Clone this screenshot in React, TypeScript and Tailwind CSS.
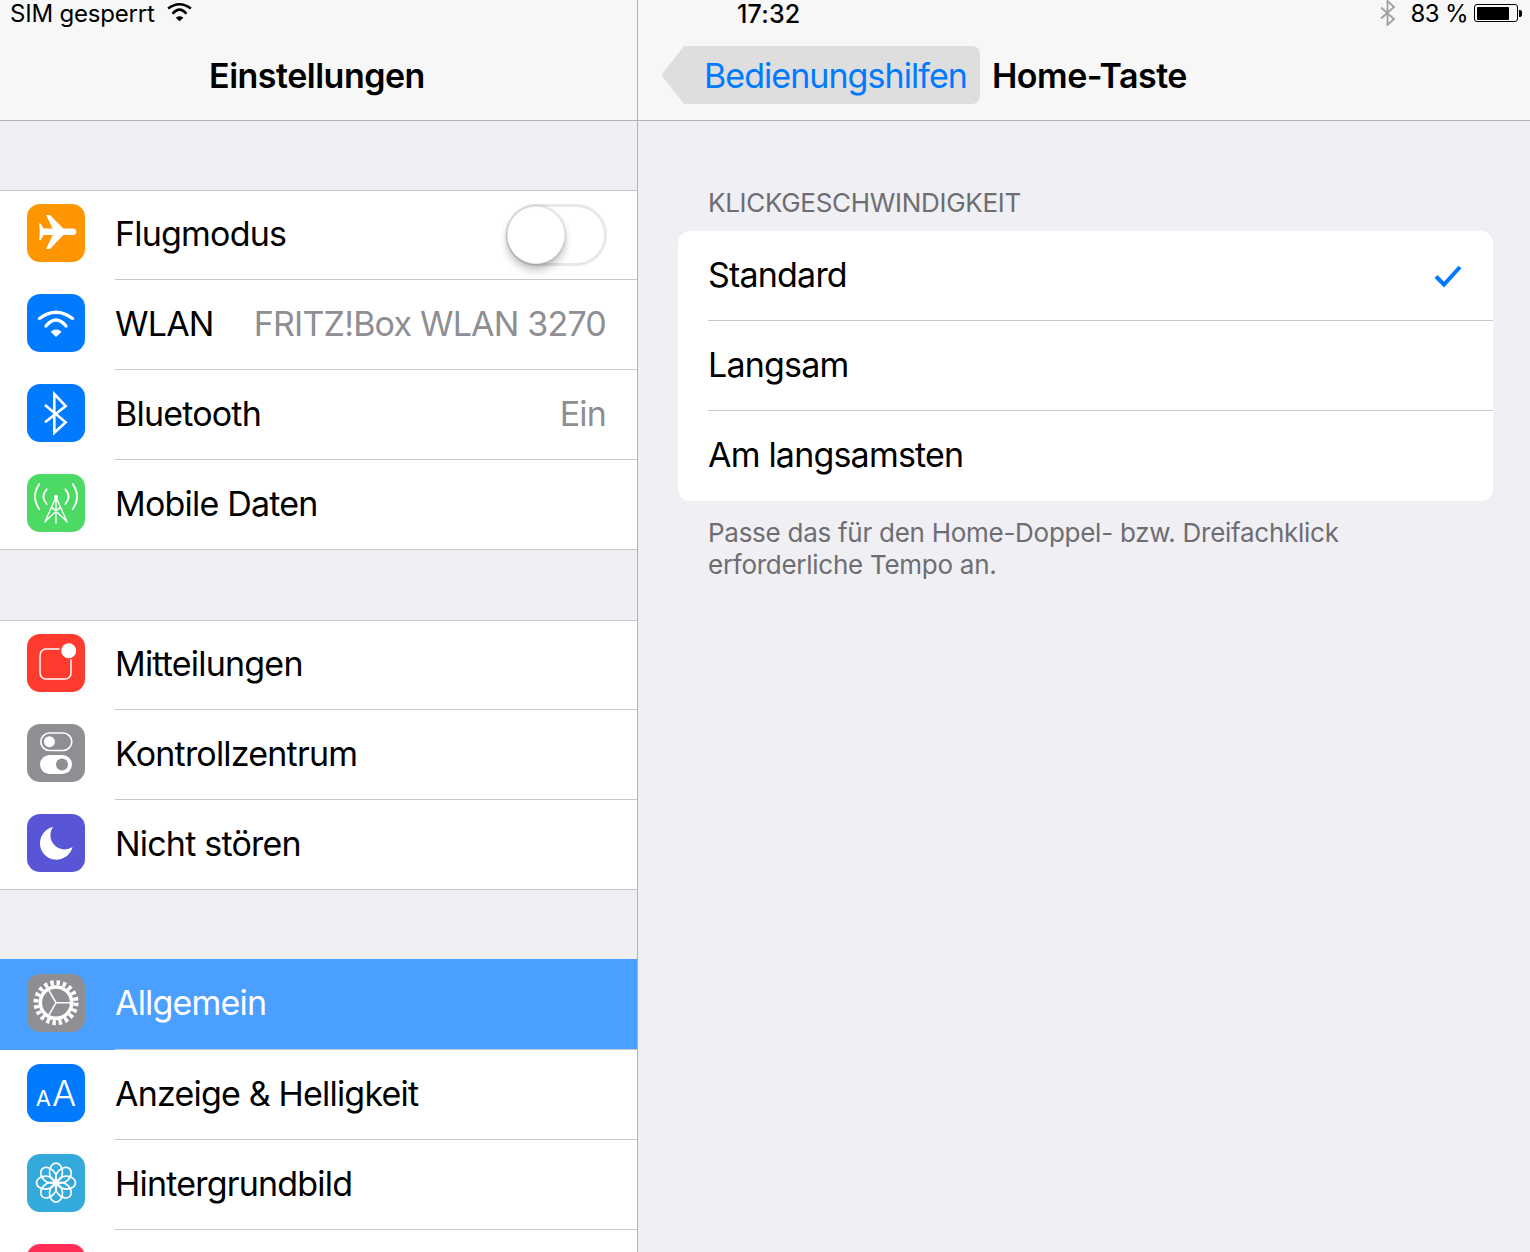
import type { ReactNode } from "react";

function Tile({ color, children }: { color: string; children?: ReactNode }) {
  return (
    <div className={`w-[58px] h-[58px] rounded-[13px] shrink-0 overflow-hidden ${color}`}>
      {children}
    </div>
  );
}

function Glyph({ children }: { children: ReactNode }) {
  return (
    <svg viewBox="0 0 58 58" width="58" height="58" fill="none" stroke="white" strokeLinecap="round" strokeLinejoin="round">
      {children}
    </svg>
  );
}

const PlaneIcon = () => (
  <Tile color="bg-[#ff9500]">
    <Glyph>
      <path
        d="M12 19.5h1.7L16.5 24.5H25.7L19 11h4L36.3 24.5H46a3.3 3.3 0 0 1 0 6.6H36.3L23 45h-4L25.7 31.1H16.5L13.7 36H12l.8-8.2z"
        fill="white"
        stroke="none"
      />
    </Glyph>
  </Tile>
);

const WifiIcon = () => (
  <Tile color="bg-[#007aff]">
    <Glyph>
      <path d="M12.5 24.5Q29 12 45.5 24.5" strokeWidth="3.4" />
      <path d="M19 32Q29 20 39 32" strokeWidth="3.4" />
      <path d="M23.7 37.7Q29 33.5 34.7 37.7L29 43z" fill="white" stroke="none" />
    </Glyph>
  </Tile>
);

const BluetoothIcon = () => (
  <Tile color="bg-[#007aff]">
    <Glyph>
      <path d="M18 21L38.7 38.3L27.3 48.7V10L38.7 22L18 38.3" strokeWidth="2.6" strokeLinecap="butt" strokeLinejoin="miter" />
    </Glyph>
  </Tile>
);

const TowerIcon = () => (
  <Tile color="bg-[#4cd964]">
    <Glyph>
      <path d="M12.3 10Q3.7 22.5 12.3 35.3M19.7 15.3Q13 22.5 19.7 30M45.7 10Q54.3 22.5 45.7 35.3M38.3 15.3Q45 22.5 38.3 30" strokeWidth="1.8" />
      <circle cx="29" cy="22.7" r="2" fill="white" stroke="none" />
      <path d="M29 23L18 47.7M29 23L40 47.7M29 23V49M24.7 33L40 47.7M33.3 33L18 47.7" strokeWidth="1.4" />
    </Glyph>
  </Tile>
);

const NotifyIcon = () => (
  <Tile color="bg-[#ff3b30]">
    <Glyph>
      <path d="M32 15H19a6 6 0 0 0-6 6V39a6 6 0 0 0 6 6H38a6 6 0 0 0 6-6V26" strokeWidth="1.5" />
      <circle cx="41.7" cy="16.7" r="7.5" fill="white" stroke="none" />
    </Glyph>
  </Tile>
);

const ControlIcon = () => (
  <Tile color="bg-[#8e8e93]">
    <Glyph>
      <rect x="13.8" y="9" width="31" height="17.5" rx="8.75" strokeWidth="1.7" />
      <circle cx="22.4" cy="17.7" r="5.5" fill="white" stroke="none" />
      <rect x="13" y="31" width="32" height="19" rx="9.5" fill="white" stroke="none" />
      <circle cx="35" cy="40.4" r="6" fill="#8e8e93" stroke="none" />
    </Glyph>
  </Tile>
);

const MoonIcon = () => (
  <Tile color="bg-[#5856d6]">
    <Glyph>
      <path d="M26 13A16.5 16.5 0 1 0 45.5 33A14.2 14.2 0 0 1 26 13z" fill="white" stroke="none" />
    </Glyph>
  </Tile>
);

const GearIcon = () => (
  <Tile color="bg-[#8e8e93]">
    <Glyph>
      <circle cx="29" cy="28.7" r="20" stroke="white" strokeWidth="5" strokeDasharray="3.4 2.88" strokeLinecap="butt" />
      <circle cx="29" cy="28.7" r="15.7" strokeWidth="3.6" />
      <path d="M29 28.7L45 28.7M29 28.7L21 14.8M29 28.7L21 42.6" strokeWidth="1.6" />
    </Glyph>
  </Tile>
);

const TextSizeIcon = () => (
  <Tile color="bg-[#007aff]">
    <div className="h-full flex items-baseline justify-center gap-[1px] pt-[11px] text-white leading-[36px] tracking-normal">
      <span className="text-[22px]">A</span>
      <span className="text-[36px] font-light">A</span>
    </div>
  </Tile>
);

const FlowerIcon = () => (
  <Tile color="bg-[#34aadc]">
    <Glyph>
      {[0, 45, 90, 135, 180, 225, 270, 315].map((a) => (
        <ellipse key={a} cx="29" cy="18.2" rx="6.5" ry="9" strokeWidth="1.7" transform={`rotate(${a} 29 28.7)`} />
      ))}
      <circle cx="29" cy="28.7" r="3" fill="white" stroke="none" />
    </Glyph>
  </Tile>
);

function Toggle() {
  return (
    <div className="w-[101px] h-[62px] -mr-px rounded-full border-[3px] border-[#e8e8e8] bg-white flex items-center">
      <div className="w-[58px] h-[58px] rounded-full bg-white -ml-[2px] border border-black/5 shadow-[0_6px_8px_rgba(0,0,0,0.25),0_0_3px_rgba(0,0,0,0.25)]" />
    </div>
  );
}

type RowProps = {
  icon: ReactNode;
  label?: string;
  value?: string;
  right?: ReactNode;
  first?: boolean;
  last?: boolean;
  selected?: boolean;
};

function Row({ icon, label, value, right, first, last, selected }: RowProps) {
  return (
    <div
      className={`flex items-stretch pl-[27px] ${
        selected ? "h-[91px] bg-[#4a9fff] text-white" : "h-[90px] bg-white text-black"
      } ${first && !selected ? "shadow-[inset_0_1px_0_#c8c7cc]" : ""} ${last ? "border-b border-[#c8c7cc]" : ""}`}
    >
      <div className={selected ? "mt-[15px]" : "mt-[14px]"}>{icon}</div>
      <div
        className={`ml-[30px] flex-1 flex items-center justify-between pr-[31px] leading-[40px] tracking-[-0.8px] ${
          last ? "" : "border-b border-[#c8c7cc]"
        }`}
      >
        <span className="-mt-[2px]">{label}</span>
        {value && <span className="-mt-[2px] text-[#8e8e93]">{value}</span>}
        {right}
      </div>
    </div>
  );
}

function Option({ label, checked, last }: { label: string; checked?: boolean; last?: boolean }) {
  return (
    <div className="h-[90px] pl-[30px]">
      <div className={`h-full flex items-center justify-between pr-[31px] leading-[40px] tracking-[-0.8px] ${last ? "" : "border-b border-[#c8c7cc]"}`}>
        <span className="-mt-[2px]">{label}</span>
        {checked && (
          <svg width="28" height="24" viewBox="0 0 28 24" fill="none" stroke="#007aff" strokeWidth="4">
            <path d="M2 12.5L10 20.5L26 3" />
          </svg>
        )}
      </div>
    </div>
  );
}

export default function App() {
  return (
    <div className="flex w-[1530px] h-[1252px] overflow-hidden bg-[#efeff4] font-['Inter',sans-serif] text-[34px] tracking-[-0.5px] text-black">
      <aside className="w-[638px] shrink-0 border-r border-[#b2b2b2]">
        <header className="h-[121px] bg-[#f7f7f7] border-b border-[#b2b2b2]">
          <div className="h-[26px] pt-[2px] flex items-center pl-[10px] text-[24px] leading-[24px] tracking-[-0.2px]">
            <span>SIM gesperrt</span>
            <svg className="ml-[12px] -mt-[4px]" width="25" height="20" viewBox="11 15 36 29" fill="none" stroke="black">
              <path d="M12.5 24.5Q29 12 45.5 24.5" strokeWidth="3.8" />
              <path d="M19 32Q29 20 39 32" strokeWidth="3.8" />
              <path d="M23.7 37.7Q29 33.5 34.7 37.7L29 43z" fill="black" stroke="none" />
            </svg>
          </div>
          <div className="mt-[20px] h-[58px] flex items-center justify-center font-semibold pr-[3px]">Einstellungen</div>
        </header>

        <div className="h-[69px]" />
        <Row first icon={<PlaneIcon />} label="Flugmodus" right={<Toggle />} />
        <Row icon={<WifiIcon />} label="WLAN" value="FRITZ!Box WLAN 3270" />
        <Row icon={<BluetoothIcon />} label="Bluetooth" value="Ein" />
        <Row last icon={<TowerIcon />} label="Mobile Daten" />

        <div className="h-[70px]" />
        <Row first icon={<NotifyIcon />} label="Mitteilungen" />
        <Row icon={<ControlIcon />} label="Kontrollzentrum" />
        <Row last icon={<MoonIcon />} label="Nicht stören" />

        <div className="h-[69px]" />
        <Row first selected icon={<GearIcon />} label="Allgemein" />
        <Row icon={<TextSizeIcon />} label="Anzeige & Helligkeit" />
        <Row icon={<FlowerIcon />} label="Hintergrundbild" />
        <Row icon={<Tile color="bg-[#ff2d55]" />} />
      </aside>

      <main className="flex-1 min-w-0">
        <header className="h-[121px] bg-[#f7f7f7] border-b border-[#b2b2b2]">
          <div className="h-[26px] pt-[2px] flex items-center pl-[99px] pr-[8px] text-[24px] leading-[24px] tracking-normal">
            <span className="font-medium text-[25px] tracking-[0.2px]">17:32</span>
            <svg className="ml-auto -mt-[2px]" width="18" height="26" viewBox="0 0 18 26" fill="none" stroke="#a0a0a0" strokeWidth="1.8">
              <path d="M2 7.5L15 19L8.5 25V1L15 7L2 18.5" />
            </svg>
            <span className="ml-[13px] tracking-[-0.6px]">83 %</span>
            <div className="-mt-[2px] ml-[6px] w-[44px] h-[18px] rounded-[3px] border border-black p-[1.5px]">
              <div className="h-full w-[84%] rounded-[1px] bg-black" />
            </div>
            <div className="-mt-[2px] ml-px w-[3px] h-[7px] rounded-r-[2px] bg-black" />
          </div>
          <div className="mt-[20px] h-[58px] pl-[24px] flex items-center">
            <svg width="31" height="58" viewBox="0 0 31 58" fill="#dedede">
              <path d="M31 0V58H22L1.2 31.5a4 4 0 0 1 0-5L22 0z" />
            </svg>
            <div className="h-full w-[287px] pl-[11px] flex items-center rounded-r-[8px] bg-[#dedede] text-[#007aff] tracking-[-0.95px]">
              Bedienungshilfen
            </div>
            <span className="ml-[12px] font-semibold">Home-Taste</span>
          </div>
        </header>

        <div className="pt-[66px] pl-[40px] pr-[37px]">
          <div className="pl-[30px] text-[26px] leading-[32px] tracking-[-0.3px] text-[#6d6d72]">KLICKGESCHWINDIGKEIT</div>
          <div className="mt-[12px] rounded-[12px] bg-white">
            <Option label="Standard" checked />
            <Option label="Langsam" />
            <Option label="Am langsamsten" last />
          </div>
          <p className="mt-[16px] pl-[30px] text-[26px] leading-[32px] tracking-[-0.27px] text-[#6d6d72]">
            Passe das für den Home-Doppel- bzw. Dreifachklick
            <br />
            erforderliche Tempo an.
          </p>
        </div>
      </main>
    </div>
  );
}
